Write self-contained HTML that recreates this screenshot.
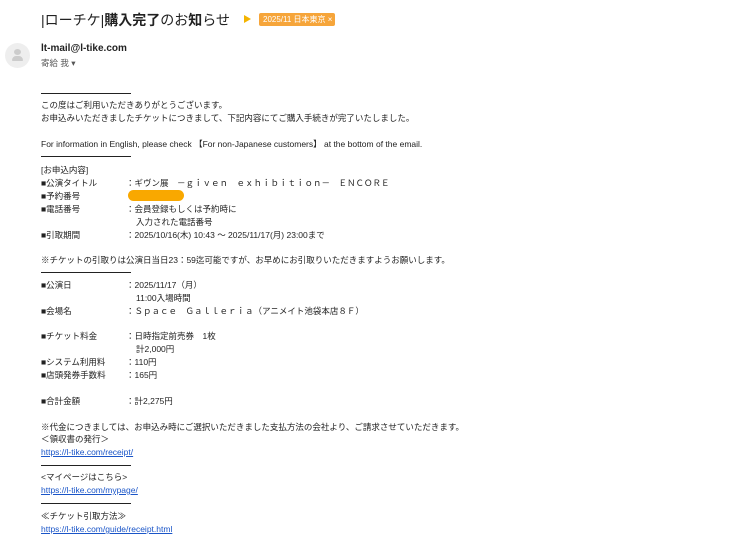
<!DOCTYPE html>
<html><head><meta charset="utf-8"><style>
body{margin:0;width:740px;height:544px;background:#fff;font-family:"Liberation Sans","Noto Sans CJK JP",sans-serif;color:#222;overflow:hidden;position:relative}
.l{position:absolute;left:41px;font-size:8.5px;line-height:11px;white-space:nowrap}
.k{position:absolute;left:126px}
.hr{position:absolute;left:41px;width:90px;height:1.2px;background:#222}
a{color:#1a55c8;text-decoration:underline}
</style></head><body>
<div style="position:absolute;left:41px;top:10px;font-size:14px;color:#222;white-space:nowrap">|ローチケ|<b style="font-weight:600">購入完了</b>のお<b style="font-weight:600">知</b>らせ</div>
<div style="position:absolute;left:244px;top:15px;width:0;height:0;border-top:4px solid transparent;border-bottom:4px solid transparent;border-left:7px solid #f4b400"></div>
<div style="position:absolute;left:259px;top:13px;width:76px;height:13px;background:#f6a53a;border-radius:2px;color:#fff;font-size:8px;line-height:13px;padding-left:4px;box-sizing:border-box;white-space:nowrap">2025/11 日本東京 ×</div>
<div style="position:absolute;left:5px;top:43px;width:25px;height:25px;border-radius:50%;background:#eee"></div>
<div style="position:absolute;left:14px;top:49px;width:7px;height:6px;border-radius:50%;background:#ccc"></div>
<div style="position:absolute;left:12px;top:56px;width:11px;height:5px;border-radius:5px 5px 1px 1px;background:#ccc"></div>
<div style="position:absolute;left:41px;top:43px;font-size:10px;font-weight:bold;color:#222">lt-mail@l-tike.com</div>
<div style="position:absolute;left:41px;top:57px;font-size:8.5px;color:#555">寄給 我 ▾</div>
<div class="hr" style="top:93px"></div>
<div class="l" style="top:100px">この度はご利用いただきありがとうございます。</div>
<div class="l" style="top:113px">お申込みいただきましたチケットにつきまして、下記内容にてご購入手続きが完了いたしました。</div>
<div class="l" style="top:139px">For information in English, please check 【For non-Japanese customers】 at the bottom of the email.</div>
<div class="hr" style="top:156px"></div>
<div class="l" style="top:165px">[お申込内容]</div>
<div class="l" style="top:178px">■公演タイトル<span class="k" style="left:85px">：ギヴン展　－ｇｉｖｅｎ　ｅｘｈｉｂｉｔｉｏｎ－　ＥＮＣＯＲＥ</span></div>
<div class="l" style="top:191px">■予約番号<span class="k" style="left:85px">：</span></div>
<div style="position:absolute;left:128px;top:190px;width:56px;height:11px;border-radius:6px;background:#f9a800"></div>
<div class="l" style="top:204px">■電話番号<span class="k" style="left:85px">：会員登録もしくは予約時に</span></div>
<div class="l" style="top:217px;left:136px">入力された電話番号</div>
<div class="l" style="top:230px">■引取期間<span class="k" style="left:85px">：2025/10/16(木) 10:43 ～ 2025/11/17(月) 23:00まで</span></div>
<div class="l" style="top:255px">※チケットの引取りは公演日当日23：59迄可能ですが、お早めにお引取りいただきますようお願いします。</div>
<div class="hr" style="top:272px"></div>
<div class="l" style="top:280px">■公演日<span class="k" style="left:85px">：2025/11/17（月）</span></div>
<div class="l" style="top:293px;left:136px">11:00入場時間</div>
<div class="l" style="top:306px">■会場名<span class="k" style="left:85px">：Ｓｐａｃｅ　Ｇａｌｌｅｒｉａ（アニメイト池袋本店８Ｆ）</span></div>
<div class="l" style="top:331px">■チケット料金<span class="k" style="left:85px">：日時指定前売券　1枚</span></div>
<div class="l" style="top:344px;left:136px">計2,000円</div>
<div class="l" style="top:357px">■システム利用料<span class="k" style="left:85px">：110円</span></div>
<div class="l" style="top:370px">■店頭発券手数料<span class="k" style="left:85px">：165円</span></div>
<div class="l" style="top:396px">■合計金額<span class="k" style="left:85px">：計2,275円</span></div>
<div class="l" style="top:422px">※代金につきましては、お申込み時にご選択いただきました支払方法の会社より、ご請求させていただきます。</div>
<div class="l" style="top:434px">＜領収書の発行＞</div>
<div class="l" style="top:447px"><a>https://l-tike.com/receipt/</a></div>
<div class="hr" style="top:465px"></div>
<div class="l" style="top:472px">&lt;マイページはこちら&gt;</div>
<div class="l" style="top:485px"><a>https://l-tike.com/mypage/</a></div>
<div class="hr" style="top:503px"></div>
<div class="l" style="top:511px">≪チケット引取方法≫</div>
<div class="l" style="top:524px"><a>https://l-tike.com/guide/receipt.html</a></div>
</body></html>
